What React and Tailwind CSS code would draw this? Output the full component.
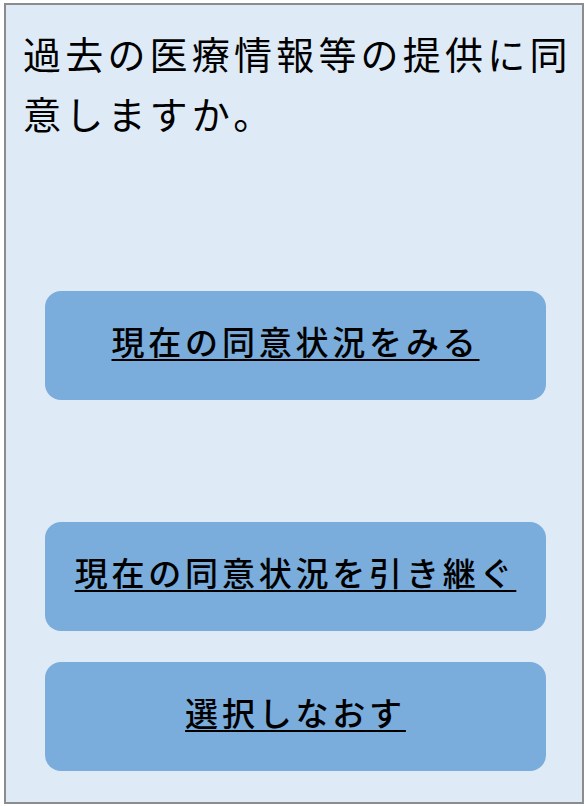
import React from 'react';

const choices = [
  { label: '現在の同意状況をみる', gap: 'mt-[144px]' },
  { label: '現在の同意状況を引き継ぐ', gap: 'mt-[122px]' },
  { label: '選択しなおす', gap: 'mt-[31px]' },
];

const App = () => {
  return (
    <div className="w-[585px] h-[806px] bg-white pt-[3px] pl-[4px]" style={{ fontFamily: '"Noto Sans CJK JP", "Noto Sans", sans-serif' }}>
      <div className="w-[580px] h-[801px] border-2 border-[#8c8c8c] bg-[#deeaf6] flex flex-col">
        <h1 className="pt-[18px] pb-[4px] pl-[17px] text-[38px] leading-[60px] tracking-[4.2px] font-normal text-black">
          過去の医療情報等の提供に同意しますか。
        </h1>

        {choices.map((c) => (
          <button
            key={c.label}
            type="button"
            className={`${c.gap} ml-[39px] w-[501px] h-[109px] rounded-[16px] bg-[#7aacdc] flex items-center justify-center pb-[8px]`}
          >
            <span className="text-[33px] tracking-[3.8px] font-medium text-black underline underline-offset-[4px] decoration-2">
              {c.label}
            </span>
          </button>
        ))}
      </div>
    </div>
  );
};

export default App;
